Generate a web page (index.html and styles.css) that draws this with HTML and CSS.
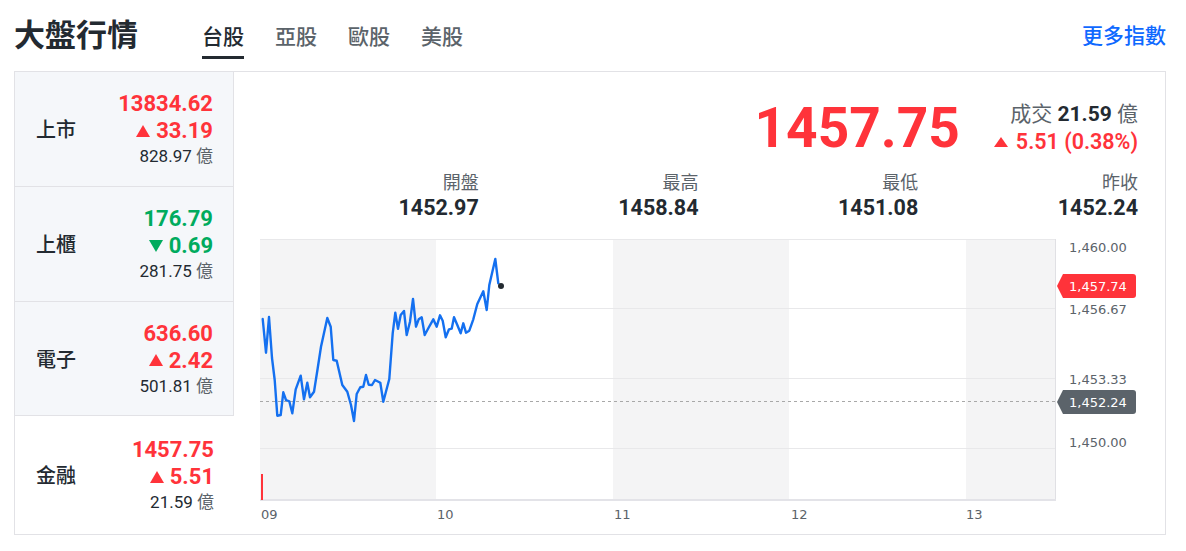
FILE: index.html
```html
<!DOCTYPE html>
<html lang="zh-Hant">
<head>
<meta charset="utf-8">
<title>大盤行情</title>
<link rel="stylesheet" href="styles.css">
</head>
<body>
<div class="page">
  <header class="header">
    <h1 class="title">大盤行情</h1>
    <nav class="tabs">
      <a class="tab active">台股</a>
      <a class="tab">亞股</a>
      <a class="tab">歐股</a>
      <a class="tab">美股</a>
    </nav>
    <a class="more">更多指數</a>
  </header>

  <section class="card">
    <div class="list">
      <div class="row">
        <div class="name">上市</div>
        <div class="vals up">
          <div class="price">13834.62</div>
          <div class="chg"><span class="tri-up"></span>33.19</div>
          <div class="vol">828.97 <span class="unit">億</span></div>
        </div>
      </div>
      <div class="row">
        <div class="name">上櫃</div>
        <div class="vals down">
          <div class="price">176.79</div>
          <div class="chg"><span class="tri-down"></span>0.69</div>
          <div class="vol">281.75 <span class="unit">億</span></div>
        </div>
      </div>
      <div class="row">
        <div class="name">電子</div>
        <div class="vals up">
          <div class="price">636.60</div>
          <div class="chg"><span class="tri-up"></span>2.42</div>
          <div class="vol">501.81 <span class="unit">億</span></div>
        </div>
      </div>
      <div class="row selected">
        <div class="name">金融</div>
        <div class="vals up">
          <div class="price">1457.75</div>
          <div class="chg"><span class="tri-up"></span>5.51</div>
          <div class="vol">21.59 <span class="unit">億</span></div>
        </div>
      </div>
    </div>

    <div class="detail">
      <div class="summary">
        <div class="big">1457.75</div>
        <div class="side">
          <div class="turnover"><span class="lbl">成交</span> <b>21.59</b> <span class="lbl">億</span></div>
          <div class="change"><span class="tri-up small"></span>5.51 (0.38%)</div>
        </div>
      </div>
      <div class="stats">
        <div class="stat"><div class="slbl">開盤</div><div class="sval">1452.97</div></div>
        <div class="stat"><div class="slbl">最高</div><div class="sval">1458.84</div></div>
        <div class="stat"><div class="slbl">最低</div><div class="sval">1451.08</div></div>
        <div class="stat"><div class="slbl">昨收</div><div class="sval">1452.24</div></div>
      </div>
      <svg class="chart" width="931" height="298" viewBox="234 236 931 298" xmlns="http://www.w3.org/2000/svg">
        <rect x="260" y="239" width="176" height="261" fill="#f4f4f5"/>
        <rect x="613" y="239" width="176" height="261" fill="#f4f4f5"/>
        <rect x="966" y="239" width="89" height="261" fill="#f4f4f5"/>
        <g stroke="#e8e8ea" stroke-width="1">
          <line x1="260" y1="239.5" x2="1055" y2="239.5"/>
          <line x1="260" y1="308.5" x2="1055" y2="308.5"/>
          <line x1="260" y1="378.5" x2="1055" y2="378.5"/>
          <line x1="260" y1="448.5" x2="1055" y2="448.5"/>
        </g>
        <line x1="1055.5" y1="239" x2="1055.5" y2="501" stroke="#e0e0e4" stroke-width="1"/>
        <line x1="260" y1="500" x2="1056" y2="500" stroke="#e3e3e8" stroke-width="2"/>
        <line x1="260" y1="401.5" x2="1058" y2="401.5" stroke="#a8a8a8" stroke-width="1" stroke-dasharray="3 3"/>
        <rect x="261" y="474" width="2" height="26" fill="#ff333a"/>
        <polyline fill="none" stroke="#1470f0" stroke-width="2.4" stroke-linejoin="round" stroke-linecap="round"
          points="262.7,319 266,352.7 269,317 272,358 274.7,380 277.3,415.7 280.7,415 283.3,392.3 286,400 289.3,401.3 292.3,413.3 295.7,389.3 300.7,375.7 304,399.3 307.3,382.7 310,397.3 314,391.7 317.7,368.3 321,346.7 327.3,318 330.7,326.7 333.3,360 336.7,360.7 342.3,385 347.3,391.7 351,405 354,421 356.7,394 360.3,387.3 363.3,386.7 366,375 368.7,384.7 372,385 375,380 380.3,382.7 383.3,401.7 389.3,379 392.7,333.3 395.3,312.7 398,328.7 400.7,315 404,311 406.7,335 410,321.7 413,299 416,326.7 418.7,319.3 421.7,317.3 424.7,335 429,327 433.3,319.3 436.7,326.7 440,315.3 442.7,320.7 445.7,337.3 449,329.3 451.7,328.7 454,317.3 457.3,325 460.7,333.3 463.3,323.3 466,332.7 469.3,330.7 473.3,319.3 477.3,304 483.3,291.3 486.7,310 489.3,285 495.3,259 498.3,283.3"/>
        <circle cx="501" cy="286" r="3" fill="#232a31"/>
        <g class="ylab">
          <text x="1069" y="252">1,460.00</text>
          <text x="1069" y="314">1,456.67</text>
          <text x="1069" y="384">1,453.33</text>
          <text x="1069" y="447">1,450.00</text>
        </g>
        <path d="M1057,286 L1063,274 H1133 Q1136,274 1136,277 V295 Q1136,298 1133,298 H1063 Z" fill="#ff333a"/>
        <text class="tagtxt" x="1069" y="291">1,457.74</text>
        <path d="M1057,402 L1063,390 H1133 Q1136,390 1136,393 V411 Q1136,414 1133,414 H1063 Z" fill="#5b636a"/>
        <text class="tagtxt" x="1069" y="407">1,452.24</text>
        <g class="xlab">
          <text x="261" y="519">09</text>
          <text x="437" y="519">10</text>
          <text x="614" y="519">11</text>
          <text x="791" y="519">12</text>
          <text x="966" y="519">13</text>
        </g>
      </svg>
    </div>
  </section>
</div>
</body>
</html>
```

FILE: styles.css
```css
* { box-sizing: border-box; }
html, body { margin: 0; padding: 0; background: #fff; }
body {
  font-family: Roboto, "Noto Sans CJK TC", sans-serif;
  color: #232a31;
}
.page { padding: 0 20px 0 14px; width: 1186px; }

.header { display: flex; align-items: flex-start; height: 71px; }
.title {
  margin: 15px 0 0 0;
  font-size: 31px; line-height: 36px; font-weight: 700;
  font-family: "Noto Sans CJK TC", sans-serif;
}
.tabs { display: flex; gap: 31px; margin-left: 64px; margin-top: 21px; }
.tab {
  font-family: "Noto Sans CJK TC", sans-serif;
  font-size: 21px; line-height: 28px; font-weight: 500;
  color: #5b636a; padding-bottom: 7px; border-bottom: 3px solid transparent;
}
.tab.active { color: #232a31; border-bottom-color: #232a31; }
.more {
  margin-left: auto; margin-top: 20px;
  font-family: "Noto Sans CJK TC", sans-serif;
  font-size: 21px; line-height: 28px; font-weight: 500; color: #0f69ff;
}

.card {
  display: flex; width: 1152px; height: 464px;
  border: 1px solid #e2e2e6;
}
.list { width: 219px; flex: none; display: flex; flex-direction: column; }
.row {
  height: 115px; flex: none;
  display: flex; justify-content: space-between; align-items: center;
  padding: 0 20px 0 21px;
  background: #f5f7fa;
  border-right: 1px solid #e2e2e6;
  border-bottom: 1px solid #e2e2e6;
}
.row:nth-child(3) { height: 114px; }
.row.selected { flex: 1; height: auto; background: #fff; border-right: none; border-bottom: none; }
.name {
  font-family: "Noto Sans CJK TC", sans-serif;
  font-size: 20px; line-height: 28px; font-weight: 500; color: #232a31;
}
.vals { text-align: right; padding-top: 1px; }
.price { font-size: 22px; line-height: 27px; font-weight: 700; }
.chg {
  font-size: 22px; line-height: 27px; font-weight: 700;
  display: flex; justify-content: flex-end; align-items: center; gap: 6px;
}
.vol { font-size: 17px; line-height: 25px; color: #232a31; }
.unit { color: #5b636a; }
.up .price, .up .chg { color: #ff333a; }
.down .price, .down .chg { color: #00ab5e; }

.tri-up, .tri-down {
  display: inline-block; width: 0; height: 0;
  border-left: 7.5px solid transparent; border-right: 7.5px solid transparent;
}
.tri-up { border-bottom: 12px solid currentColor; }
.tri-down { border-top: 12px solid currentColor; }
.tri-up.small { border-left-width: 7.5px; border-right-width: 7.5px; border-bottom-width: 10px; }

.detail { flex: 1; display: flex; flex-direction: column; }
.summary {
  display: flex; justify-content: flex-end; align-items: center; gap: 34px;
  margin-top: 26px; height: 60px; padding: 0 27px 0 25px;
}
.big { font-size: 55px; line-height: 60px; font-weight: 700; color: #ff333a; }
.side { text-align: right; }
.turnover { font-size: 21px; line-height: 28px; }
.turnover b { font-weight: 700; color: #232a31; }
.lbl { color: #5b636a; }
.change {
  font-size: 21.5px; line-height: 28px; font-weight: 600; color: #ff333a;
  display: flex; justify-content: flex-end; align-items: center; gap: 8px;
}

.stats {
  display: grid; grid-template-columns: repeat(4, 1fr);
  margin-top: 12px; padding: 0 27px 0 25px;
}
.stat { text-align: right; }
.slbl { font-size: 18px; line-height: 25px; color: #5b636a; }
.sval { font-size: 21.5px; line-height: 25px; font-weight: 700; }

.chart { display: block; margin-top: 16px; }
.ylab text, .xlab text {
  font-family: "DejaVu Sans", sans-serif; font-size: 13px; fill: #5b636a;
}
.tagtxt { font-family: "DejaVu Sans", sans-serif; font-size: 13px; fill: #fff; }
```
